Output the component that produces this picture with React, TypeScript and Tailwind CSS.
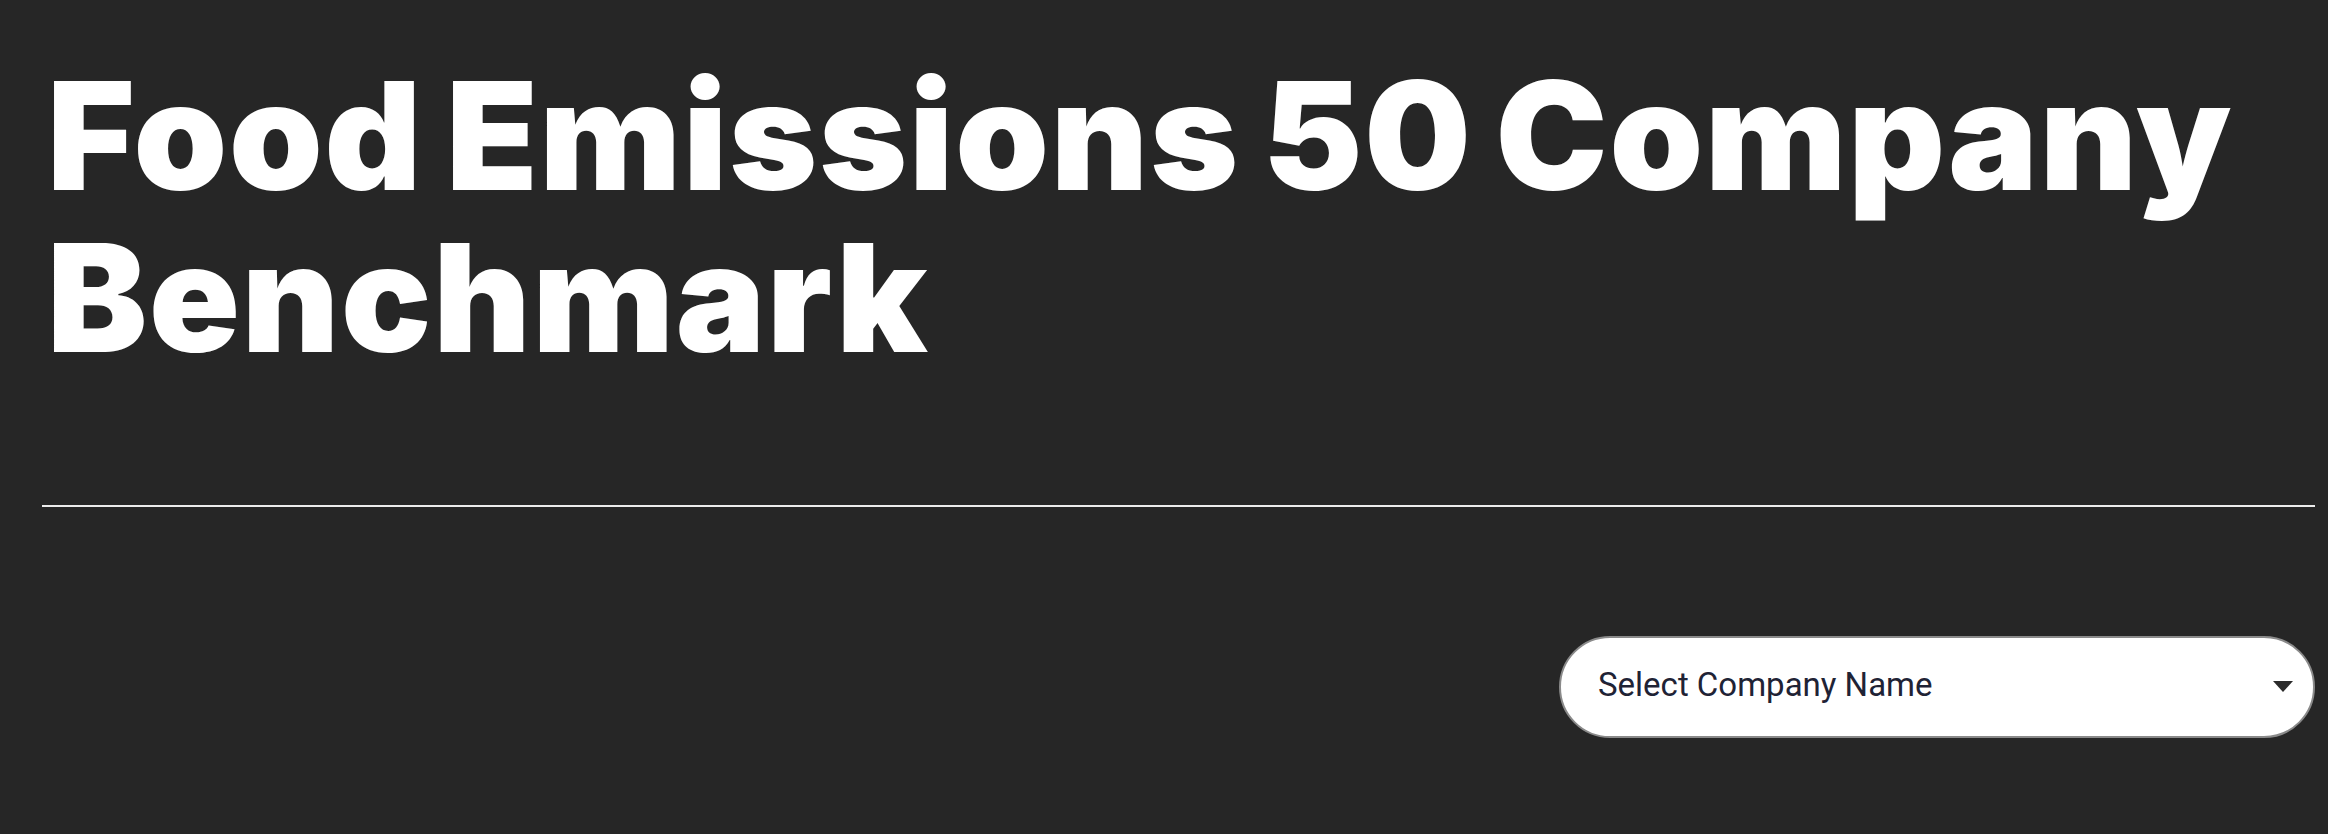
import { useState } from 'react';

const companies = ['Select Company Name', 'Nestlé', 'PepsiCo', 'Unilever', 'Danone', 'Tyson Foods'];

function CompanySelect() {
  const [value, setValue] = useState(companies[0]);

  return (
    <div className="relative w-[756px] h-[102px]">
      <select
        value={value}
        onChange={e => setValue(e.target.value)}
        className="appearance-none w-full h-full rounded-full bg-white border-2 border-[#8a8a8a] pl-[37px] pr-[70px] pb-[4px] text-[33px] text-[#1f2335] outline-none [font-family:Roboto,'Liberation_Sans',sans-serif]"
      >
        {companies.map(c => (
          <option key={c} value={c}>{c}</option>
        ))}
      </select>
      {/* dropdown caret */}
      <svg
        className="pointer-events-none absolute right-[22px] top-[45px]"
        width="20"
        height="11"
        viewBox="0 0 20 11"
      >
        <path d="M0 0 H20 L10 11 Z" fill="#2b2b2b" />
      </svg>
    </div>
  );
}

export default function App() {
  return (
    <div className="min-h-screen bg-[#262626] pl-[42px] pr-[13px] pt-[55px]">
      <h1 className="pl-[5px] text-white font-black text-[150px] leading-[162px] tracking-[0.012em] [word-spacing:-9px] [font-family:Inter,'Liberation_Sans',sans-serif]">
        Food Emissions 50 Company
        <br />
        Benchmark
      </h1>
      <hr className="mt-[126px] border-0 h-[2px] bg-[#ececec]" />
      <div className="flex justify-end mt-[129px]">
        <CompanySelect />
      </div>
    </div>
  );
}
